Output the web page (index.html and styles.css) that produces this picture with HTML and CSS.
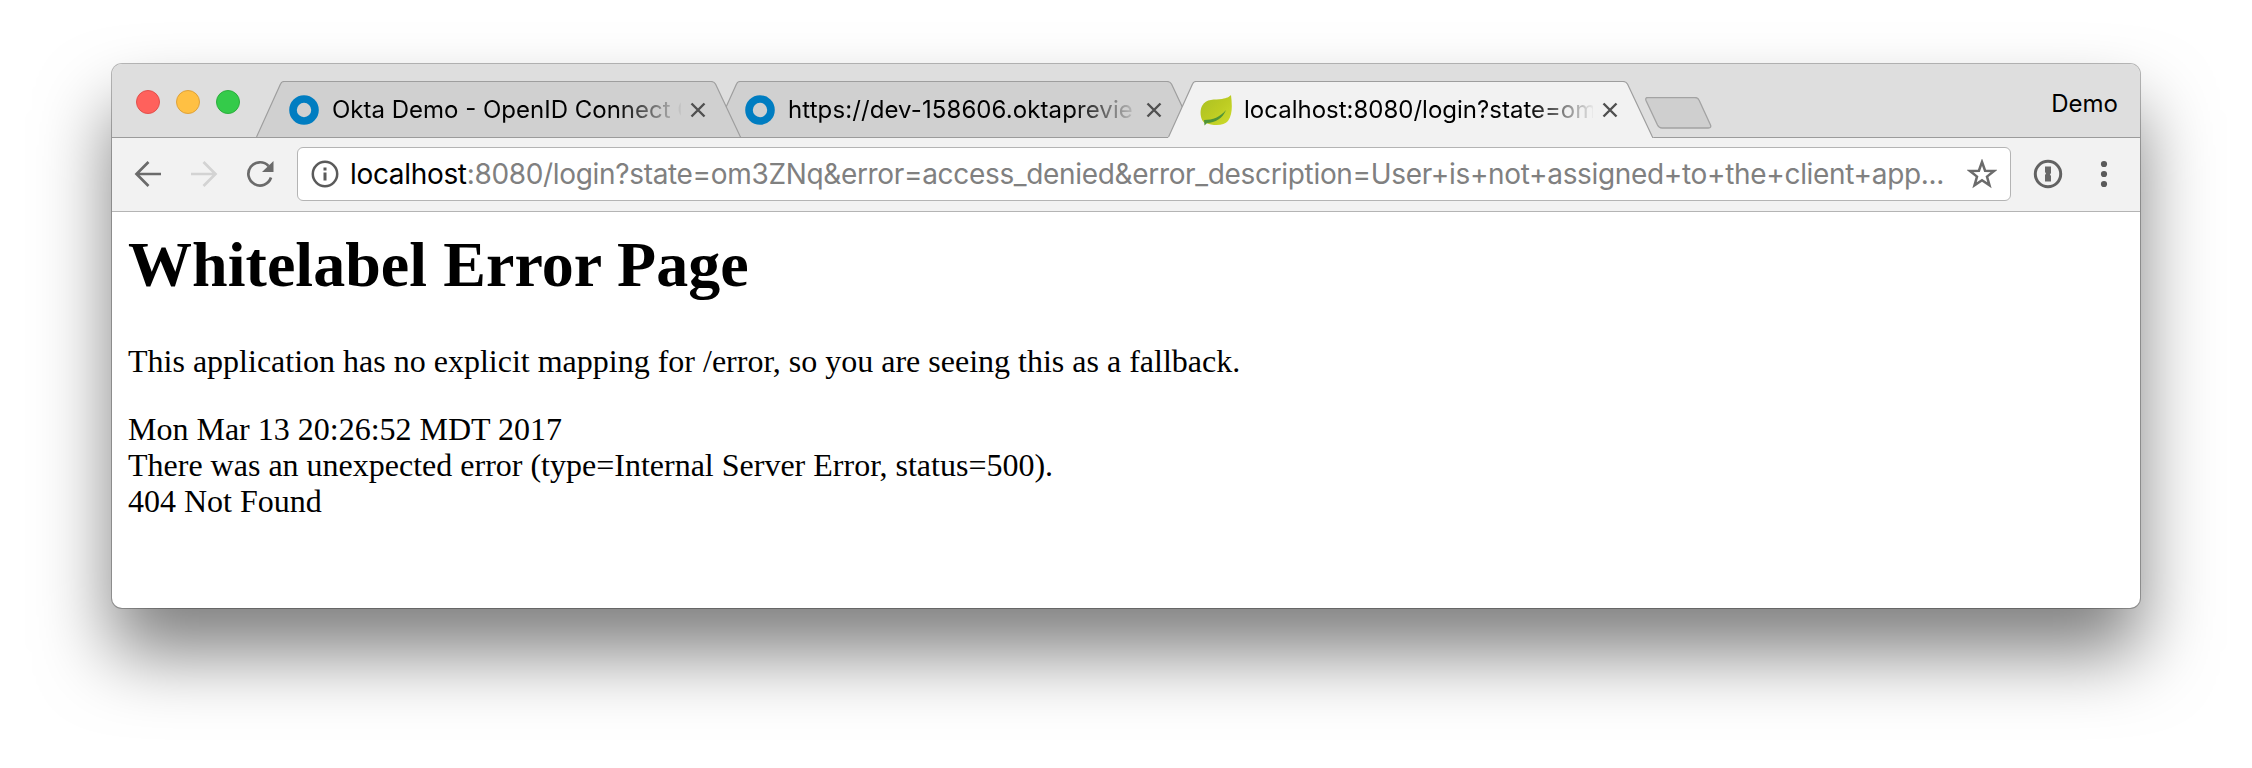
FILE: index.html
```html
<!DOCTYPE html>
<html lang="en">
<head>
<meta charset="utf-8">
<title>Whitelabel Error Page</title>
<link rel="stylesheet" href="styles.css">
</head>
<body>
<svg class="defs" width="0" height="0" aria-hidden="true">
  <defs>
    <symbol id="tab-shape" viewBox="0 0 486 57">
      <path class="tab-fill" d="M0 57 L24.5 3 Q25.5 .5 28 .5 H455 Q458 .5 459.5 3 L484 55 Q485 57 486 57 Z"/>
      <path class="tab-line" d="M.5 56 L24.5 3 Q25.5 .5 28 .5 H455 Q458 .5 459.5 3 L484 55 L485 57"/>
    </symbol>
    <symbol id="okta" viewBox="0 0 30 30"><circle cx="15" cy="15" r="11" fill="none" stroke="#007dc1" stroke-width="7.6"/></symbol>
    <symbol id="close" viewBox="0 0 16 16"><path d="M1.5 1.5 L14.5 14.5 M14.5 1.5 L1.5 14.5" fill="none" stroke="#505050" stroke-width="2.4"/></symbol>
  </defs>
</svg>
<div class="window">
  <header class="tabstrip">
    <div class="lights"><i class="light red"></i><i class="light yellow"></i><i class="light green"></i></div>
    <div class="tabs">
      <div class="tab first">
        <svg class="tab-bg"><use href="#tab-shape"/></svg>
        <svg class="favicon"><use href="#okta"/></svg>
        <span class="title">Okta Demo - OpenID Connect C</span>
        <svg class="close"><use href="#close"/></svg>
      </div>
      <div class="tab second">
        <svg class="tab-bg"><use href="#tab-shape"/></svg>
        <svg class="favicon"><use href="#okta"/></svg>
        <span class="title">https://dev-158606.oktaprevie</span>
        <svg class="close"><use href="#close"/></svg>
      </div>
      <div class="tab active">
        <svg class="tab-bg"><use href="#tab-shape"/></svg>
        <svg class="favicon leaf" viewBox="0 0 32 32">
          <defs><linearGradient id="leaf" x1="0" y1="0" x2="1" y2="1"><stop offset="0" stop-color="#a9c024"/><stop offset=".5" stop-color="#bccb22"/><stop offset="1" stop-color="#cddc2c"/></linearGradient></defs>
          <path d="M31 1 C32 10 33 20 28 27 C24 32 14 32 5 29 C1 27 -1 18 2 12 C6 4 15 6 22 5 C27 4 29 3 31 1 Z" fill="url(#leaf)"/>
          <path d="M4.500 31.500 L4 26 C13 26 20 23 26 16 C23 24 15 29 7 29 Z" fill="#4f9438"/>
        </svg>
        <span class="title">localhost:8080/login?state=om</span>
        <svg class="close"><use href="#close"/></svg>
      </div>
    </div>
    <svg class="newtab" viewBox="0 0 67 32"><path d="M1 3.500 Q0 .5 3 .5 H50 Q53 .5 54 3 L65.500 28 Q66.500 31 63.500 31 H17 Q14 31 12.500 28 Z" fill="#cfcfcf" stroke="#a3a3a3" stroke-width="1.300"/></svg>
    <span class="profile">Demo</span>
  </header>
  <div class="toolbar">
    <svg class="nav" viewBox="0 0 28 28"><path d="M27 14 H3 M14.500 2 L2.500 14 L14.500 26" fill="none" stroke="#6b6b6b" stroke-width="2.700"/></svg>
    <svg class="nav" viewBox="0 0 28 28"><path d="M1 14 H25 M13.500 2 L25.500 14 L13.500 26" fill="none" stroke="#d3d3d3" stroke-width="2.700"/></svg>
    <svg class="nav reload" viewBox="0 0 28 28"><path d="M22.500 6 A11.600 11.600 0 1 0 25 17.500" fill="none" stroke="#6b6b6b" stroke-width="2.700"/><path d="M27.500 1 V12 H16 Z" fill="#6b6b6b"/></svg>
    <div class="omnibox">
      <svg class="info" viewBox="0 0 28 28"><circle cx="14" cy="14" r="12.200" fill="none" stroke="#5a5a5a" stroke-width="2.500"/><path d="M14 7.500 v3 M14 12.500 v8" stroke="#5a5a5a" stroke-width="3"/></svg>
      <span class="url"><b>localhost</b>:8080/login?state=om3ZNq&amp;error=access_denied&amp;error_description=User+is+not+assigned+to+the+client+app...</span>
      <svg class="star" viewBox="0 0 30 30"><path d="M15 3 L18.100 11.700 L27 12 L20 17.600 L22.500 26.400 L15 21.300 L7.500 26.400 L10 17.600 L3 12 L11.900 11.700 Z" fill="none" stroke="#6b6b6b" stroke-width="2.500"/></svg>
    </div>
    <svg class="onepass" viewBox="0 0 30 30"><circle cx="15" cy="15" r="12.700" fill="none" stroke="#626262" stroke-width="3"/><path d="M12 7.500 H18 V14 L17 15.500 L18 17 V22.500 H12 V16 L13 14.500 L12 13 Z" fill="#686868"/></svg>
    <svg class="menu" viewBox="0 0 8 28"><g fill="#5a5a5a"><circle cx="4" cy="4" r="3.100"/><circle cx="4" cy="14" r="3.100"/><circle cx="4" cy="24" r="3.100"/></g></svg>
  </div>
  <main class="page">
    <h1>Whitelabel Error Page</h1>
    <p>This application has no explicit mapping for /error, so you are seeing this as a fallback.</p>
    <div>Mon Mar 13 20:26:52 MDT 2017</div>
    <div>There was an unexpected error (type=Internal Server Error, status=500).</div>
    <div>404 Not Found</div>
  </main>
</div>
</body>
</html>
```
FILE: styles.css
```css
* { box-sizing: border-box; }
html { height: 768px; overflow: hidden; background: #fff; }
body { margin: 0; padding: 64px 112px; height: 768px; overflow: hidden; }
svg { display: block; flex: none; }
.defs { position: absolute; }
.window {
  width: 2028px;
  height: 544px;
  border-radius: 10px;
  background: #fff;
  box-shadow: 0 0 0 1px rgba(0, 0, 0, .27), 0 45px 72px rgba(0, 0, 0, .5);
  font-family: Inter, "Liberation Sans", sans-serif;
}
.tabstrip {
  display: flex;
  height: 74px;
  border-bottom: 1px solid #9b9b9b;
  border-radius: 10px 10px 0 0;
  background: #dedede;
}
.lights { display: flex; gap: 16px; width: 144px; padding: 26px 0 0 24px; }
.light { width: 24px; height: 24px; border-radius: 50%; border: 1px solid; }
.red { background: #ff615c; border-color: #e2504c; }
.yellow { background: #ffc043; border-color: #dfa23a; }
.green { background: #34cb4a; border-color: #2cae3d; }
.tabs { display: flex; padding-top: 17px; height: 74px; }
.tab {
  position: relative;
  display: flex;
  align-items: center;
  width: 456px;
  height: 57px;
  padding-left: 33px;
}
.first { z-index: 2; }
.second { z-index: 1; }
.active { z-index: 3; }
.tab-bg { position: absolute; left: 0; top: 0; width: 486px; height: 57px; z-index: -1; }
.first .tab-bg, .second .tab-bg { clip-path: inset(0 0 1px 0); }
.tab-fill { fill: var(--tab-fill, #d0d0d0); }
.tab-line { fill: none; stroke: #9e9e9e; stroke-width: 1.2; }
.active .tab-bg { --tab-fill: #f2f2f2; }
.favicon { width: 30px; height: 30px; margin-right: 13px; }
.leaf { width: 32px; height: 32px; margin-left: -1px; margin-right: 12px; }
.title {
  width: 349px;
  margin-right: 9px;
  overflow: hidden;
  white-space: nowrap;
  font-size: 24px;
  line-height: 32px;
  color: #000;
  -webkit-mask-image: linear-gradient(to right, #000 284px, transparent 352px);
  mask-image: linear-gradient(to right, #000 284px, transparent 352px);
}
.second .title { letter-spacing: .1px; }
.close { width: 16px; height: 16px; }
.newtab { width: 67px; height: 32px; margin: 33px 0 0 21px; }
.profile { margin: 24px 22px 0 auto; font-size: 24px; line-height: 32px; color: #000; }
.toolbar {
  display: flex;
  align-items: center;
  height: 74px;
  padding: 0 32px 1px 22px;
  border-bottom: 1px solid #b4b4b4;
  background: #f2f2f2;
}
.nav { width: 28px; height: 28px; margin-right: 28px; }
.reload { margin-right: 23px; }
.omnibox {
  display: flex;
  align-items: center;
  width: 1714px;
  height: 54px;
  padding: 0 13px;
  border: 1px solid #b4b4b4;
  border-radius: 6px;
  background: #fff;
}
.info { width: 28px; height: 28px; margin-right: 11px; }
.url { flex: 1; font-size: 28px; line-height: 36px; letter-spacing: -.33px; white-space: nowrap; color: #808080; }
.url b { font-weight: 400; color: #000; }
.star { width: 30px; height: 30px; }
.onepass { width: 30px; height: 30px; margin-left: 22px; }
.menu { width: 8px; height: 28px; margin-left: auto; }
.page {
  padding: 16px;
  font: 32px/36px "Liberation Serif", "Times New Roman", serif;
  color: #000;
}
.page h1 { margin: 0 0 41px; font-size: 64px; line-height: 74px; letter-spacing: .05px; }
.page p { margin: 0 0 32px; }
```
